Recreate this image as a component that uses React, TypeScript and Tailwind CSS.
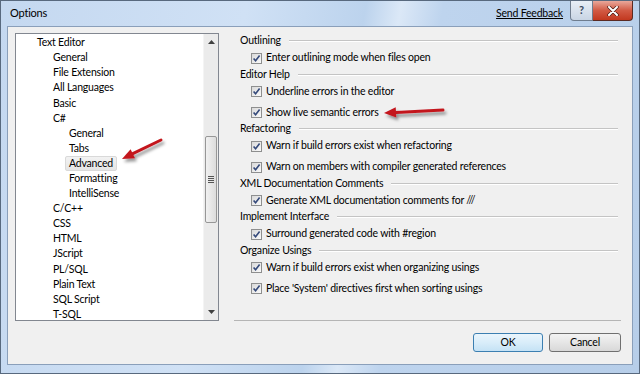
import React from 'react';

type TreeItem = { label: string; level: number; selected?: boolean };

const treeItems: TreeItem[] = [
  { label: 'Text Editor', level: 0 },
  { label: 'General', level: 1 },
  { label: 'File Extension', level: 1 },
  { label: 'All Languages', level: 1 },
  { label: 'Basic', level: 1 },
  { label: 'C#', level: 1 },
  { label: 'General', level: 2 },
  { label: 'Tabs', level: 2 },
  { label: 'Advanced', level: 2, selected: true },
  { label: 'Formatting', level: 2 },
  { label: 'IntelliSense', level: 2 },
  { label: 'C/C++', level: 1 },
  { label: 'CSS', level: 1 },
  { label: 'HTML', level: 1 },
  { label: 'JScript', level: 1 },
  { label: 'PL/SQL', level: 1 },
  { label: 'Plain Text', level: 1 },
  { label: 'SQL Script', level: 1 },
  { label: 'T-SQL', level: 1 },
];

const groups = [
  { title: 'Outlining', items: ['Enter outlining mode when files open'] },
  { title: 'Editor Help', items: ['Underline errors in the editor', 'Show live semantic errors'] },
  {
    title: 'Refactoring',
    items: ['Warn if build errors exist when refactoring', 'Warn on members with compiler generated references'],
  },
  { title: 'XML Documentation Comments', items: ['Generate XML documentation comments for ///'] },
  { title: 'Implement Interface', items: ['Surround generated code with #region'] },
  {
    title: 'Organize Usings',
    items: ['Warn if build errors exist when organizing usings', "Place 'System' directives first when sorting usings"],
  },
];

const indent = ['pl-[21px]', 'pl-[37px]', 'pl-[49px]'];

const Check = () => (
  <span className="flex h-[11px] w-[11px] shrink-0 items-center justify-center border border-[#8e8f8f] bg-[linear-gradient(135deg,#d9d9d9,#fafafa)]">
    <svg width="9" height="9" viewBox="0 0 9 9">
      <path d="M1.6 4.4 L3.6 6.8 L7.6 1.6" fill="none" stroke="#34497a" strokeWidth="1.6" />
    </svg>
  </span>
);

const TreeRow = ({ item }: { item: TreeItem }) => (
  <div className={`flex h-[15.1px] items-center whitespace-nowrap ${indent[item.level]}`}>
    {item.selected ? (
      <span className="flex h-[15px] items-center rounded-[2px] border border-[#d9d9d9] bg-[linear-gradient(#f2f2f2,#e5e5e5)] px-[3px]">
        {item.label}
      </span>
    ) : (
      <span className={item.level === 2 ? 'pl-[4px]' : ''}>{item.label}</span>
    )}
  </div>
);

const ScrollBar = () => (
  <div className="flex w-[15px] flex-col bg-[#ebebeb] border-l border-[#f4f4f4]">
    <div className="flex h-[16px] items-center justify-center">
      <svg width="7" height="4" viewBox="0 0 7 4">
        <path d="M0 4 L3.5 0 L7 4 Z" fill="#404040" />
      </svg>
    </div>
    <div className="h-[86px]" />
    <div className="mx-[1px] flex h-[87px] items-center justify-center rounded-[2px] border border-[#979797] bg-[linear-gradient(to_right,#f1f1f1,#dcdcdc)]">
      <div className="flex flex-col gap-[1px]">
        <div className="h-px w-[6px] bg-[#555]" />
        <div className="h-px w-[6px] bg-[#555]" />
        <div className="h-px w-[6px] bg-[#555]" />
        <div className="h-px w-[6px] bg-[#555]" />
      </div>
    </div>
    <div className="flex-1" />
    <div className="flex h-[16px] items-center justify-center">
      <svg width="7" height="4" viewBox="0 0 7 4">
        <path d="M0 0 L3.5 4 L7 0 Z" fill="#404040" />
      </svg>
    </div>
  </div>
);

const Arrows = () => (
  <svg className="pointer-events-none absolute left-0 top-0" width="640" height="374" viewBox="0 0 640 374">
    <defs>
      <filter id="sh" x="-20%" y="-50%" width="150%" height="250%">
        <feDropShadow dx="2" dy="3" stdDeviation="1.6" floodColor="#000" floodOpacity="0.4" />
      </filter>
    </defs>
    <g filter="url(#sh)">
      <path d="M160 139 L131.8 152.7" stroke="#c3161f" strokeWidth="3" strokeLinecap="round" />
      <path d="M121 158 L134 157.2 L129.6 148.2 Z" fill="#c3161f" />
      <path d="M442 109 L395 111.4" stroke="#c3161f" strokeWidth="3" strokeLinecap="round" />
      <path d="M383 112 L395.3 116.6 L394.7 106.2 Z" fill="#c3161f" />
    </g>
  </svg>
);

export default function App() {
  return (
    <div className="relative flex h-[374px] w-[640px] flex-col overflow-hidden border border-[#58697e] bg-[linear-gradient(100deg,#c4d8f0_0%,#d0e1f5_35%,#bcd3ed_52%,#dbe8f7_57%,#bed4ee_63%,#b7cee9_100%)] font-['Lato',sans-serif] text-[10.5px] tracking-[-0.2px] text-black">
      <div className="flex h-[25px] items-center pl-[9px]">
        <span className="text-[11px]">Options</span>
        <div className="flex-1" />
        <span className="mr-[7px] text-[10.5px] underline">Send Feedback</span>
        <div className="mr-[6px] flex self-start">
          <div className="flex h-[20px] w-[23px] items-center justify-center rounded-bl-[4px] border border-t-0 border-[#6f7d8f] bg-[linear-gradient(#e8eef6,#c9d5e4)] text-[11px] font-bold text-[#3a4a60]">
            ?
          </div>
          <div className="flex h-[20px] w-[40px] items-center justify-center rounded-br-[4px] border border-l-0 border-t-0 border-[#5a2a22] bg-[linear-gradient(#e9a89b,#d25a44_50%,#c2381f)]">
            <svg width="12" height="10" viewBox="0 0 12 10">
              <path d="M2 1 L10 9 M10 1 L2 9" stroke="#4a1a12" strokeWidth="3.4" strokeLinecap="round" />
              <path d="M2 1 L10 9 M10 1 L2 9" stroke="#fff" strokeWidth="2" strokeLinecap="round" />
            </svg>
          </div>
        </div>
      </div>

      <div className="mx-[6px] mb-[8px] flex flex-1 flex-col border border-[#8a9fba] bg-[#f0f0f0]">
        <div className="ml-[7px] mt-[6px] flex gap-[15px]">
          <div className="flex h-[288px] w-[204px] border border-[#828790] bg-white">
            <div className="flex-1 overflow-hidden pt-[1.5px]">
              {treeItems.map((item, i) => (
                <TreeRow key={i} item={item} />
              ))}
            </div>
            <ScrollBar />
          </div>

          <div className="h-[288px] w-[387px] border-b border-[#b5b5b5]">
            {groups.map((g) => (
              <div key={g.title}>
                <div className="flex h-[16.5px] items-center pl-[6px]">
                  <span>{g.title}</span>
                  <div className="ml-[8px] mr-[3px] h-[2px] flex-1 border-t border-b border-t-[#c4c4c4] border-b-white" />
                </div>
                <div className="flex flex-col gap-[4px]">
                  {g.items.map((t) => (
                    <div key={t} className="flex h-[17px] items-center gap-[4px] pl-[17px]">
                      <Check />
                      <span>{t}</span>
                    </div>
                  ))}
                </div>
              </div>
            ))}
          </div>
        </div>

        <div className="mt-[12px] flex justify-end gap-[6px] pr-[11px]">
          <button className="flex h-[19px] w-[70px] items-center justify-center rounded-[3px] border border-[#3c7fb1] bg-[linear-gradient(#eaf5fc,#d9edfa_50%,#c5e2f5)]">
            OK
          </button>
          <button className="flex h-[19px] w-[72px] items-center justify-center rounded-[3px] border border-[#707070] bg-[linear-gradient(#f3f3f3,#e6e6e6_50%,#d8d8d8)]">
            Cancel
          </button>
        </div>
      </div>
      <Arrows />
    </div>
  );
}
